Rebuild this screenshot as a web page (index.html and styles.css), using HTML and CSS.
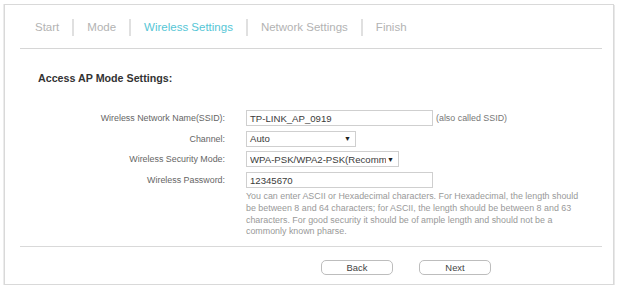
FILE: index.html
```html
<!DOCTYPE html>
<html>
<head>
<meta charset="utf-8">
<link rel="stylesheet" href="styles.css">
</head>
<body>
<div class="panel">
  <nav class="steps">
    <span class="step">Start</span>
    <span class="sep"></span>
    <span class="step">Mode</span>
    <span class="sep"></span>
    <span class="step active">Wireless Settings</span>
    <span class="sep"></span>
    <span class="step">Network Settings</span>
    <span class="sep"></span>
    <span class="step">Finish</span>
  </nav>
  <div class="content">
    <h2 class="title">Access AP Mode Settings:</h2>
    <div class="form">
      <div class="row">
        <label class="lbl">Wireless Network Name(SSID):</label>
        <div class="field"><span class="input wide">TP-LINK_AP_0919</span><span class="note">(also called SSID)</span></div>
      </div>
      <div class="row">
        <label class="lbl">Channel:</label>
        <div class="field"><span class="input select chan">Auto<span class="arrow">&#9660;</span></span></div>
      </div>
      <div class="row">
        <label class="lbl">Wireless Security Mode:</label>
        <div class="field"><span class="input select sec"><span class="clip">WPA-PSK/WPA2-PSK(Recomm</span><span class="arrow">&#9660;</span></span></div>
      </div>
      <div class="row">
        <label class="lbl">Wireless Password:</label>
        <div class="field"><span class="input wide">12345670</span></div>
      </div>
      <div class="row">
        <span class="lbl"></span>
        <p class="help">You can enter ASCII or Hexadecimal characters. For Hexadecimal, the length should be between 8 and 64 characters; for ASCII, the length should be between 8 and 63 characters. For good security it should be of ample length and should not be a commonly known pharse.</p>
      </div>
    </div>
  </div>
  <div class="actions">
    <button class="btn">Back</button>
    <button class="btn">Next</button>
  </div>
</div>
</body>
</html>
```

FILE: styles.css
```css
html, body {
  margin: 0;
  padding: 0;
  background: #ffffff;
  font-family: "Liberation Sans", Arial, sans-serif;
}
.panel {
  margin: 4px 0 0 4px;
  height: 279px;
  border: 1px solid #d9d9d9;
  box-shadow: 1px 1px 0 #e8e8e8, -1px 0 0 #ececec;
  padding: 0 11px 0 15px;
  box-sizing: content-box;
  width: 582px;
  display: flex;
  flex-direction: column;
}
.steps {
  display: flex;
  align-items: center;
  height: 43px;
  padding-left: 15px;
  border-bottom: 1px solid #d6d6d6;
}
.step {
  font-size: 11.5px;
  color: #b3b3b3;
}
.step.active {
  color: #56c6d6;
}
.sep {
  width: 2px;
  height: 17px;
  background: #e0e0e0;
  margin: 1px 13px 0 13px;
}
.content {
  height: 197px;
  border-bottom: 1px solid #d9d9d9;
}
.title {
  margin: 23px 0 0 18px;
  font-size: 10.7px;
  font-weight: bold;
  color: #333;
  line-height: 12px;
}
.form {
  margin-top: 26px;
  display: flex;
  flex-direction: column;
  gap: 4.7px;
}
.form .row:last-child {
  margin-top: -1.5px;
}
.row {
  display: grid;
  grid-template-columns: 205px 1fr;
  column-gap: 21px;
  align-items: center;
}
.lbl {
  text-align: right;
  font-size: 8.9px;
  color: #666;
}
.field {
  display: flex;
  align-items: center;
}
.input {
  display: flex;
  align-items: center;
  box-sizing: border-box;
  height: 16px;
  border: 1px solid #cfcfcf;
  padding: 0 3px;
  font-size: 9.6px;
  color: #3a3a3a;
  white-space: nowrap;
  overflow: hidden;
}
.wide {
  width: 187px;
}
.chan {
  width: 110px;
}
.sec {
  width: 153px;
}
.select {
  justify-content: space-between;
  padding-right: 4px;
}
.clip {
  overflow: hidden;
  width: 136px;
}
.arrow {
  font-size: 7px;
  color: #222;
}
.note {
  font-size: 8.9px;
  color: #777;
  margin-left: 3px;
}
.help {
  margin: 0;
  font-size: 8.9px;
  line-height: 11.7px;
  color: #999;
  width: 342px;
}
.actions {
  display: flex;
  gap: 26px;
  padding: 13px 0 0 301px;
}
.btn {
  width: 72px;
  height: 15px;
  border: 1px solid #bdbdbd;
  border-radius: 5px;
  background: #fff;
  padding: 0;
  font-family: "Liberation Sans", Arial, sans-serif;
  font-size: 9.4px;
  color: #444;
}
```
